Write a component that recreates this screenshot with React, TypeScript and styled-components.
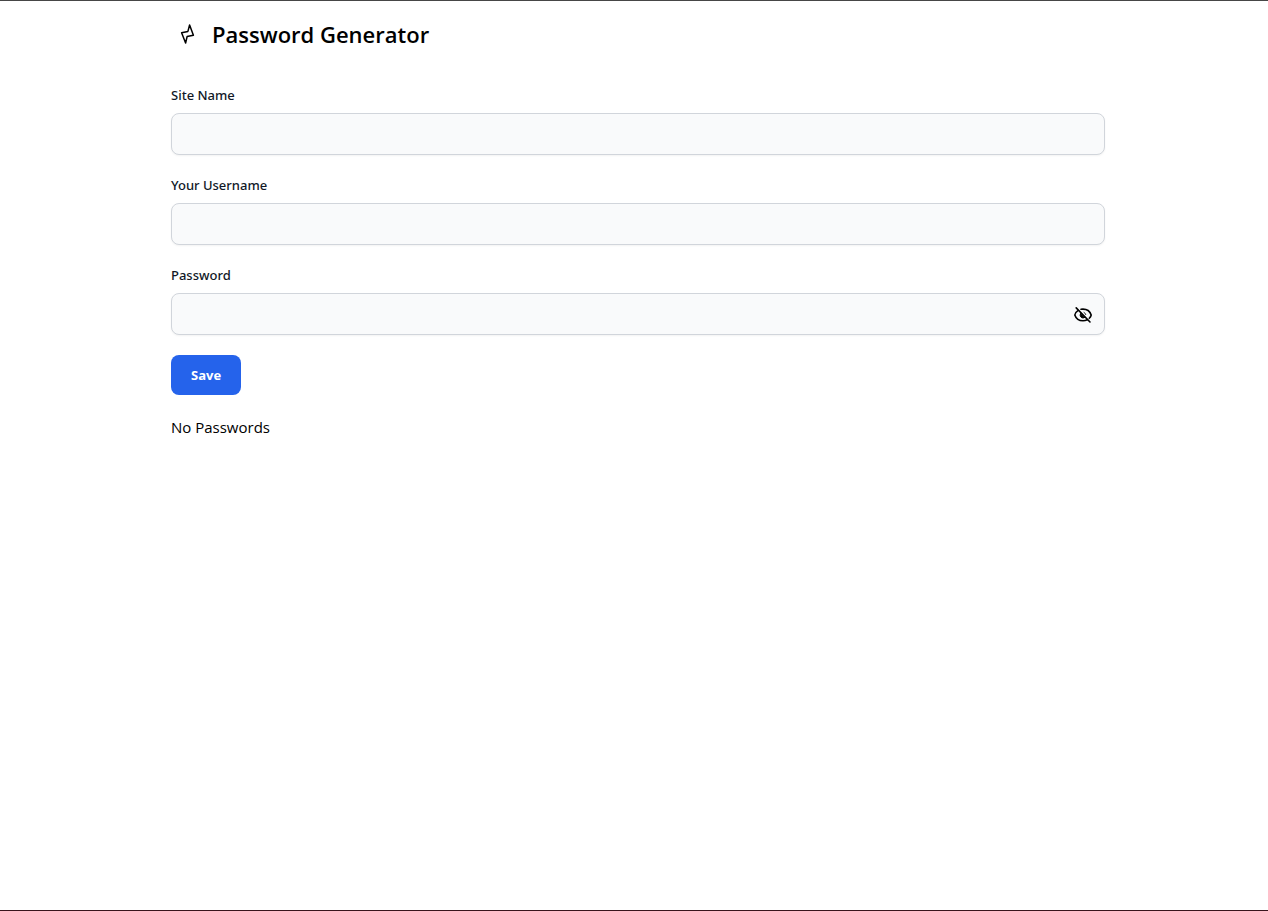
import React, { useState } from "react";
import styled, { createGlobalStyle } from "styled-components";

const GlobalStyle = createGlobalStyle`
  *, *::before, *::after { box-sizing: border-box; }
  body {
    margin: 0;
    background: #ffffff;
    color: #000000;
    font-family: "Segoe UI", "Open Sans", "Noto Sans", sans-serif;
    font-size: 15px;
    line-height: 24px;
  }
`;

const Page = styled.div`
  display: flex;
  flex-direction: column;
  min-height: 100vh;
  border-top: 1px solid #464646;
  border-bottom: 1px solid #38141c;
`;

const Container = styled.main`
  width: 100%;
  max-width: 1024px;
  margin: 0 auto;
  padding: 16px 41px 16px 49px;
`;

const Header = styled.header`
  display: flex;
  align-items: center;
  gap: 9px;
  margin-bottom: 34px;
`;

const Logo = styled.svg`
  width: 32px;
  height: 32px;
  fill: none;
  stroke: #000000;
`;

const Title = styled.h1`
  margin: 0;
  font-size: 22px;
  font-weight: 600;
  line-height: 34px;
`;

const Form = styled.form`
  display: flex;
  flex-direction: column;
  align-items: flex-start;
  gap: 20px;
  margin-bottom: 20px;
`;

const Field = styled.div`
  display: flex;
  flex-direction: column;
  gap: 8px;
  width: 100%;
`;

const Label = styled.label`
  color: #111827;
  font-family: "Segoe UI", "Noto Sans", sans-serif;
  font-size: 13px;
  font-weight: 500;
  line-height: 20px;
`;

const InputBox = styled.div`
  display: flex;
  align-items: center;
  height: 42px;
  border: 1px solid #d1d5db;
  border-radius: 8px;
  background: #f9fafb;
  box-shadow: 0 1px 2px rgba(0, 0, 0, 0.05);
`;

const Input = styled.input`
  flex: 1;
  min-width: 0;
  height: 100%;
  padding: 10px;
  border: 0;
  border-radius: 8px;
  outline: none;
  background: transparent;
  color: #111827;
  font: inherit;
`;

const ToggleButton = styled.button`
  display: flex;
  margin: 2px 11px 0 0;
  padding: 0;
  border: 0;
  background: none;
  color: #000000;
  cursor: pointer;
`;

const EyeSvg = styled.svg`
  width: 20px;
  height: 20px;
  fill: none;
  stroke: currentColor;
  stroke-width: 1.6;
  stroke-linecap: round;
  stroke-linejoin: round;
`;

const SaveButton = styled.button`
  padding: 10px 20px;
  border: 0;
  border-radius: 8px;
  background: #2563eb;
  color: #ffffff;
  font-family: inherit;
  font-size: 13px;
  font-weight: 700;
  line-height: 20px;
  cursor: pointer;
`;

const Empty = styled.p`
  margin: 0;
`;

function EyeIcon({ crossed }: { crossed: boolean }) {
  if (!crossed) {
    return (
      <EyeSvg viewBox="0 0 20 20" aria-hidden="true">
        <path d="M1.8 10C3 6.5 6.2 4.1 10 4.1S17 6.5 18.2 10C17 13.5 13.8 15.9 10 15.9S3 13.5 1.8 10Z" />
        <circle cx="10" cy="10" r="2.4" />
      </EyeSvg>
    );
  }
  return (
    <EyeSvg viewBox="0 0 20 20" aria-hidden="true">
      <path d="M4.9 5.6C3.2 6.7 2 8.3 1.8 10C3 13.5 6.2 15.8 10 15.8C11.6 15.8 13 15.4 14.3 14.8" />
      <path d="M8 4.3C8.6 4.1 9.3 4.1 10 4.1C13.8 4.1 17 6.5 18.2 10C17.9 11.3 17.2 12.4 16.3 13.3" />
      <path d="M3.2 2.9L17 17" />
      <path d="M7.7 8.2A3 3 0 0 0 11.9 12.4Z" fill="currentColor" strokeWidth="1" />
      <path d="M11 7.4A2.8 2.8 0 0 1 12.8 9.6" strokeWidth="0.8" />
    </EyeSvg>
  );
}

export default function App() {
  const [visible, setVisible] = useState(false);

  return (
    <>
      <GlobalStyle />
      <Page>
        <Container>
          <Header>
            <Logo viewBox="0 0 32 32" aria-hidden="true">
              <path
                d="M18.6 7L22.4 17.2L16.1 18.6L14.6 25L10.6 14.8L16.9 13.4Z"
                strokeWidth="1.5"
                strokeLinejoin="round"
              />
            </Logo>
            <Title>Password Generator</Title>
          </Header>
          <Form onSubmit={(e) => e.preventDefault()}>
            <Field>
              <Label htmlFor="site">Site Name</Label>
              <InputBox>
                <Input id="site" type="text" />
              </InputBox>
            </Field>
            <Field>
              <Label htmlFor="username">Your Username</Label>
              <InputBox>
                <Input id="username" type="text" />
              </InputBox>
            </Field>
            <Field>
              <Label htmlFor="password">Password</Label>
              <InputBox>
                <Input id="password" type={visible ? "text" : "password"} />
                <ToggleButton
                  type="button"
                  aria-label={visible ? "Hide password" : "Show password"}
                  onClick={() => setVisible(!visible)}
                >
                  <EyeIcon crossed={!visible} />
                </ToggleButton>
              </InputBox>
            </Field>
            <SaveButton type="submit">Save</SaveButton>
          </Form>
          <Empty>No Passwords</Empty>
        </Container>
      </Page>
    </>
  );
}
